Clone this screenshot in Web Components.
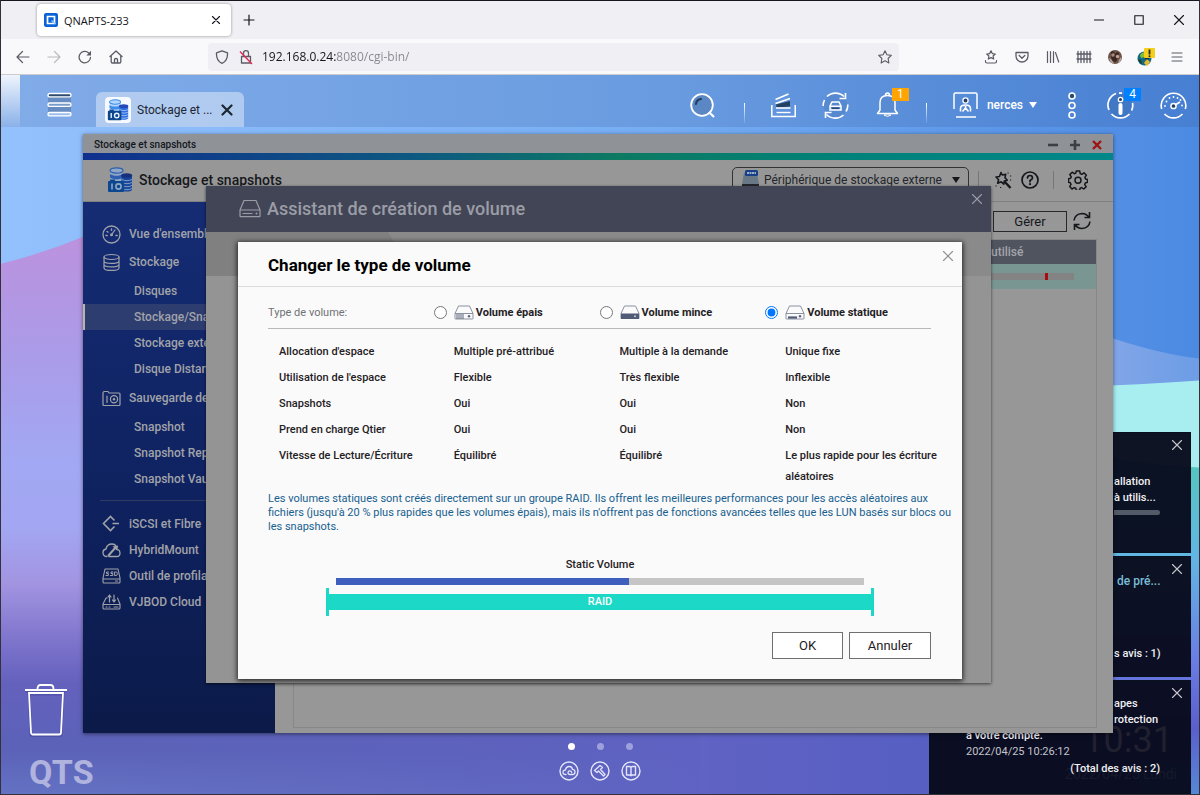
<!DOCTYPE html>
<html lang="fr">
<head>
<meta charset="utf-8">
<title>QNAPTS-233</title>
<style>
html, body { height: 100%; margin: 0; }
body { display: flex; flex-direction: column; box-sizing: border-box; overflow: hidden; border: 1px solid #33303c; border-top-color: #1a1620; font-family: Roboto, "Liberation Sans", sans-serif; font-size: 12px; color: #222; }
browser-chrome { flex: none; }
qts-desktop { flex: 1; min-height: 0; }
</style>
</head>
<body>
<browser-chrome></browser-chrome>
<qts-desktop></qts-desktop>
<script>
const STROKE = 'fill="none" stroke="currentColor" stroke-linecap="round" stroke-linejoin="round"';
const DISKS = `<path d="M3 4v11h13V4z" fill="var(--disk-b,#b4d6fb)"/><path d="M3 7c3 2.400 10 2.400 13 0v3.500c-3 2.400-10 2.400-13 0z" fill="var(--disk-a,#3d8cec)"/><ellipse cx="9.500" cy="3.500" rx="6.500" ry="2.600" fill="var(--disk-b,#b4d6fb)" stroke="var(--disk-a,#3d8cec)" stroke-width="1.200"/><path d="M14.500 9v14c2 2 8.500 2 10.500 0V9z" fill="var(--disk-c,#2f6ce0)"/><ellipse cx="19.700" cy="8.500" rx="5.500" ry="2.300" fill="var(--disk-d,#2448b8)"/><path d="M15 12.500c3 1.600 7 1.600 10 0M15 15.500c3 1.600 7 1.600 10 0M15 18.500c3 1.600 7 1.600 10 0M15 21.500c3 1.600 7 1.600 10 0" fill="none" stroke="var(--disk-b,#b4d6fb)" stroke-width=".9"/><rect x="1" y="14" width="16" height="11" rx="1" fill="#0d4790"/><rect x="3" y="12.500" width="5" height="3" fill="#0d4790"/><path d="M5 16.500v6" stroke="var(--disk-b,#eaf3ff)" stroke-width="1.600"/><circle cx="11.500" cy="19.500" r="2.600" fill="none" stroke="var(--disk-b,#eaf3ff)" stroke-width="1.600"/>`;
const ICONS = {
  back: [14, 14, `<path d="M13 7H1M6.500 1.500 1 7l5.500 5.500" ${STROKE} stroke-width="1.200"/>`],
  forward: [14, 14, `<path d="M1 7h12M7.500 1.500 13 7l-5.500 5.500" ${STROKE} stroke-width="1.200"/>`],
  reload: [14, 14, `<path d="M12.500 7.500a5.700 5.700 0 1 1-1.800-4.600" ${STROKE} stroke-width="1.300"/><path d="M13 .8v4.700H8.300z" fill="currentColor"/>`],
  home: [14, 14, `<path d="M1 6.500 7 1l6 5.500M2.200 6v5.800q0 1.200 1.200 1.200h7.200q1.200 0 1.200-1.200V6M5.500 13V9.500q0-1 1.500-1t1.500 1V13" ${STROKE} stroke-width="1.300"/>`],
  shield: [14, 14, `<path d="M7 .8 12.500 2.800c.3 5-1.500 8.700-5.500 10.500C3 11.500 1.200 7.800 1.500 2.800z" ${STROKE} stroke-width="1.300"/>`],
  lock: [14, 16, `<path d="M2.500 7.500h9V14h-9zM4.500 7.500V4.200a2.500 2.500 0 0 1 5 0v3.300" ${STROKE} stroke-width="1.300"/><path d="M1 2.500 13 15" stroke="#e22850" stroke-width="1.400"/>`],
  star: [14, 14, `<path d="M7 .8 8.900 4.800l4.400.6-3.200 3.100.8 4.400L7 10.800l-3.900 2.100.8-4.400L.7 5.400l4.400-.6z" ${STROKE} stroke-width="1.100"/>`],
  starTray: [14, 14, `<path d="M7 .8 8.300 3.600l3 .4L9.100 6l.6 3L7 7.600 4.300 9l.6-3L2.700 4l3-.4zM1.500 10.500v1q0 1.500 1.500 1.500h8q1.500 0 1.500-1.500v-1" ${STROKE} stroke-width="1.200"/>`],
  pocket: [14, 14, `<path d="M1 2.500h12V6a6 6 0 0 1-12 0zM4.200 5.500 7 8.200l2.800-2.700" ${STROKE} stroke-width="1.300"/>`],
  library: [14, 14, `<path d="M1.500 1.500v11M4.500 1.500v11M7.500 1.500v11M9.500 2.500l3.200 9.500" ${STROKE} stroke-width="1.200"/>`],
  fence: [16, 14, `<path d="M2 1.500v11M5 1.500v11M8 1.500v11M11 1.500v11M14 1.500v11M1 4h14M1 9h14" ${STROKE} stroke-width="1.300"/>`],
  photo: [16, 16, `<circle cx="8" cy="8" r="7" fill="#6b5348"/><path d="M4 3q3-2 4 2 2-3 4-1l-1 5-2 4-4-1-1-5z" fill="#3a2622"/><circle cx="6" cy="6" r="1.800" fill="#a68a7c"/><circle cx="10.500" cy="7.500" r="1.700" fill="#c4a393"/><path d="M2 9q3 1 5 6-4-1-5-6zM12 11l2-3q1 4-3 6z" fill="#b9a79e"/>`],
  globe: [20, 20, `<circle cx="8.500" cy="11.500" r="7" fill="#126a86"/><path d="M4 8q4-5 7-2l-2 4-4 1z" fill="#8bbf2b"/><path d="M8 16l3-4 3 3-3 4z" fill="#e8b72c"/><path d="M2 12l3 1 1 4q-3-1-4-5z" fill="#1d3f22"/><circle cx="11" cy="10" r="2.500" fill="#142f3c"/><rect x="8" y="1" width="11" height="10" rx="1" fill="#f4cf1e"/><path d="M13.500 2.500v5" stroke="#2a2a10" stroke-width="1.800"/><circle cx="13.500" cy="9.300" r="1" fill="#2a2a10"/>`],
  menu: [12, 12, `<path d="M1 2h10M1 6h10M1 10h10" ${STROKE} stroke-width="1.100"/>`],
  close: [10, 10, `<path d="M1.500 1.500l7 7M8.500 1.500l-7 7" ${STROKE} stroke-width="1.100"/>`],
  closeBig: [12, 12, `<path d="M1.500 1.500l9 9M10.500 1.500l-9 9" ${STROKE} stroke-width="2.200"/>`],
  closeThin: [12, 12, `<path d="M1.500 1.500l9 9M10.500 1.500l-9 9" ${STROKE} stroke-width="1.100"/>`],
  plus: [12, 12, `<path d="M6 1v10M1 6h10" ${STROKE} stroke-width="1.200"/>`],
  plusBold: [10, 10, `<path d="M5 0v10M0 5h10" stroke="currentColor" stroke-width="2.600"/>`],
  minus: [10, 10, `<path d="M0 5h10" stroke="currentColor" stroke-width="1"/>`],
  minusBold: [10, 10, `<path d="M0 5h10" stroke="currentColor" stroke-width="2.600"/>`],
  crossRed: [10, 10, `<path d="M1 1l8 8M9 1l-8 8" stroke="currentColor" stroke-width="2.400"/>`],
  maximize: [10, 10, `<path d="M.8.8h8.400v8.400H.8z" fill="none" stroke="currentColor" stroke-width="1.100"/>`],
  qnap: [14, 14, `<rect width="14" height="14" rx="2" fill="#0a63d6"/><path d="M3.500 3.500h7v7h-7z" fill="none" stroke="#fff" stroke-width="1.700"/><path d="M7.500 7.500 11.500 11" stroke="#9cc6ff" stroke-width="1.600"/>`],
  burger: [25, 26, `<rect x="1" y="4" width="23" height="18" fill="#5c7fb0" opacity=".7"/><rect x="1" y="1.500" width="23" height="3.400" rx="1.700" fill="#2d4a70" stroke="#fff" stroke-width="1.400"/><rect x="1" y="11" width="23" height="3.400" rx="1.700" fill="#7a9ccc" stroke="#fff" stroke-width="1.400"/><rect x="1" y="20.500" width="23" height="3.400" rx="1.700" fill="#9dbff0" stroke="#fff" stroke-width="1.400"/>`],
  disks: [26, 26, DISKS],
  search: [25, 25, `<circle cx="12" cy="12" r="10.800" fill="#5b87c4" stroke="#fff" stroke-width="1.800"/><path d="M6 11q.5-4.500 5-5" fill="none" stroke="#21405e" stroke-width="2.200" stroke-linecap="round"/><path d="M19 19l5 5" stroke="#fff" stroke-width="2.200"/>`],
  stack: [25, 25, `<path d="M.8 12v11.500h23.400V12" fill="none" stroke="#fff" stroke-width="1.500"/><path d="M5.500 19.500h14" stroke="#fff" stroke-width="1.400"/><path d="M5 11.500 19 8v5.500L5.500 14.500z" fill="#24415f"/><path d="M4.500 6.500 17.500 1M4.500 10.500 19 5.500M5 15h14.500" stroke="#fff" stroke-width="1.500"/>`],
  sync: [27, 27, `<circle cx="13.500" cy="13.500" r="11.500" fill="#4e80c4" opacity=".5"/><path d="M1.200 14A12.300 12.300 0 0 1 2.500 8M5 4.500A12.300 12.300 0 0 1 22 4.500M25.800 12.500A12.300 12.300 0 0 1 24 19.500M21.500 23A12.300 12.300 0 0 1 4.500 22.500" fill="none" stroke="#fff" stroke-width="1.600"/><path d="M23.500 1v5.500h-6M3.500 26v-5.500h6" fill="none" stroke="#fff" stroke-width="1.600"/><path d="M8 18v-4l2-4h7l2 4v4zM8 14.200h11" fill="none" stroke="#fff" stroke-width="1.500"/><path d="M10 16.200h7" stroke="#24415f" stroke-width="1.300"/>`],
  bell: [25, 26, `<path d="M9 23q3.500 3 7 0z" fill="#21405e" stroke="#fff"/><path d="M2.500 21.500 5 18v-7.500c0-4.500 3-7 7.500-7s7.500 2.500 7.500 7V18l2.500 3.500zM10.500 3.300q0-2.300 2-2.300t2 2.300" fill="#588bd2" stroke="#fff" stroke-width="1.500" stroke-linejoin="round"/>`],
  user: [25, 26, `<path d="M1 17V2.500Q1 1 2.500 1h20Q24 1 24 2.500V17M3 25h20" fill="none" stroke="#fff" stroke-width="1.500"/><circle cx="12.500" cy="8.500" r="2.600" fill="#24415f" stroke="#fff" stroke-width="1.300"/><path d="M7.500 19.500v-3q0-3.500 5-3.500t5 3.500v3M12.500 14v2l-3 3.500M12.500 16l3 3.500" fill="none" stroke="#fff" stroke-width="1.600"/>`],
  dots: [10, 27, `<circle cx="5" cy="4" r="3" fill="#2a4a70" stroke="#fff" stroke-width="1.600"/><circle cx="5" cy="13.500" r="3" fill="#4f86d2" stroke="#fff" stroke-width="1.600"/><circle cx="5" cy="23" r="3" fill="#4f86d2" stroke="#fff" stroke-width="1.600"/>`],
  info: [27, 27, `<circle cx="13.500" cy="13.500" r="11.500" fill="#356bb4" opacity=".5"/><path d="M9 1.500A12.300 12.300 0 0 0 2 18M25.500 11q.8 4-1 7.500M4.500 22a12.300 12.300 0 0 0 18 0M12 1.200h3" fill="none" stroke="#fff" stroke-width="1.700"/><circle cx="13.500" cy="7.500" r="2.200" fill="#24415f" stroke="#fff" stroke-width="1.300"/><path d="M13.500 13v8" stroke="#fff" stroke-width="4" stroke-linecap="round"/>`],
  gauge: [27, 27, `<path d="M1.700 17A12.300 12.300 0 1 1 25.300 17M4.500 22a12.300 12.300 0 0 0 18 0" fill="none" stroke="#fff" stroke-width="1.600"/><g fill="#fff"><circle cx="5" cy="14" r=".9"/><circle cx="6.500" cy="9.500" r=".9"/><circle cx="9.500" cy="6" r=".9"/><circle cx="13.500" cy="5" r=".9"/><circle cx="17.500" cy="6" r=".9"/><circle cx="20.500" cy="8" r=".9"/><circle cx="22" cy="13.500" r=".9"/></g><circle cx="13.500" cy="14" r="2.600" fill="#24415f" stroke="#fff" stroke-width="1.500"/><path d="M15 13l5-3" stroke="#fff" stroke-width="1.800"/>`],
  dash: [19, 19, `<circle cx="9.500" cy="9.500" r="8.500" ${STROKE} stroke-width="1.300"/><circle cx="9.500" cy="9.800" r="1.500" fill="currentColor"/><path d="M10 9l3-4" ${STROKE} stroke-width="1.200"/><path d="M4 10.500h1.200M5 6.500l1 .6M9.500 4v1.200M14 10.500h1.200" ${STROKE} stroke-width="1.400"/>`],
  db: [19, 19, `<ellipse cx="9.500" cy="4" rx="7.500" ry="2.500" ${STROKE} stroke-width="1.200"/><path d="M2 4v11c0 3.300 15 3.300 15 0V4M2 8c0 3.200 15 3.200 15 0M2 11.500c0 3.200 15 3.200 15 0" ${STROKE} stroke-width="1.200"/>`],
  snap: [19, 17, `<path d="M1 15V3q0-1.500 1.500-1.500H6L7 3h10q1 0 1 1v10.500q0 1-1 1H2q-1 0-1-1M5 6v6.500" ${STROKE} stroke-width="1.200"/><circle cx="12" cy="9.300" r="3.600" ${STROKE} stroke-width="1.200"/><circle cx="12" cy="9.300" r="1.200" fill="currentColor"/>`],
  iscsi: [19, 18, `<path d="M12.500 5.500 8.500 1.500 1.500 8.500l7 7 4-4M10.500 8.500H17" fill="none" stroke="currentColor" stroke-width="1.600"/>`],
  cloud: [19, 15, `<path d="M5 13.500q-4 0-4-4 0-3 3-3.500Q5 1 10 1q3 0 4 2M7 13.500h8q3 0 3-3.500 0-2.500-2-3.500" ${STROKE} stroke-width="1.300"/><path d="M6 13l8-9" stroke="currentColor" stroke-width="2"/><path d="M10.500 3.500 16 2.500l-.5 5.500z" fill="currentColor"/>`],
  ssd: [19, 16, `<path d="M3 1h13l2 9v4q0 1-1 1H2q-1 0-1-1v-4zM1 11h17M13.500 13h2" ${STROKE} stroke-width="1.100"/><path d="M6.500 4H4.500v1.500h1.800V7.500H4M11 4H9v1.500h1.800V7.500H8.500M13 4h1.200q1.200 0 1.200 1.700t-1.200 1.800H13z" ${STROKE} stroke-width="1"/>`],
  vjbod: [19, 16, `<path d="M5 4H4L1 10v4q0 1 1 1h15q1 0 1-1v-4l-2.500-6M1 10.500h17M4 13h1M7 13h1M12 13h4" ${STROKE} stroke-width="1.100"/><path d="M7.500 8V2M6 3l1.500-2L9 3M12 1v6M10.500 6 12 8l1.500-2" ${STROKE} stroke-width="1.200"/>`],
  drive: [22, 19, `<path d="M5 1.500h12L21 11v6q0 .7-.7.7H1.700Q1 17.700 1 17v-6zM1 11h20M4 14.500h9" ${STROKE} stroke-width="1.200"/><circle cx="17.500" cy="14.500" r="1" fill="currentColor"/>`],
  raid: [20, 20, `<path d="M3 3h13l2 11v5H1v-5z" fill="#687886"/><path d="M1 14h17v5H1z" fill="#24282c"/><rect x="4" y="0" width="13" height="6" rx="1.500" fill="#173f86"/><path d="M6 3h9" stroke="#9dadc8" stroke-width="2" stroke-dasharray="2 .5"/>`],
  wand: [18, 18, `<path d="M7 1.500 8.200 4l3.500-.6-.7 3.300 2.300 2.500-3 .8-.5 3.200-2.600-2.400-3.500 1.400.9-3.500L2 6l3.500-.5z" ${STROKE} stroke-width="1.600"/><path d="M10.500 10.500 16.500 17" stroke="currentColor" stroke-width="2.400"/><path d="M13.500 2h1.200M16 5h1.200M16 9h1.200M1.500 15h1.200M6 16.500h1.200" stroke="currentColor" stroke-width="1.200"/>`],
  help: [18, 18, `<circle cx="9" cy="9" r="8" ${STROKE} stroke-width="1.700"/><path d="M6.500 7q0-2.500 2.500-2.500T11.500 7Q11.500 8.200 9 9.500v1.200" ${STROKE} stroke-width="1.700"/><circle cx="9" cy="13.200" r="1.100" fill="currentColor"/>`],
  gear: [20, 20, `<path d="M8.300 1h3.400l.5 2.600 1.600.7 2.200-1.500 2.400 2.400-1.500 2.200.7 1.600 1.900.5v2.800l-2.200.7-.6 1.600 1.500 2-2.400 2.400-2.100-1.400-1.600.7-.5 2.200H8.300l-.5-2.300-1.600-.6L4 19l-2.300-2.400L3 14.400l-.7-1.600-1.800-.6V8.800L2.600 8.300l.7-1.500L1.800 4.600 4.200 2.200l2.100 1.500 1.500-.6z" ${STROKE} stroke-width="1.500"/><circle cx="10" cy="10.300" r="3" ${STROKE} stroke-width="1.500"/>`],
  refresh: [18, 20, `<path d="M1 9.500Q2 3 9 2.500q4.500 0 7 4M17 10.500q-1 6.500-8 7-4.500 0-7-4M16.500 1v5.500h-5M1.500 19v-5.500h5" fill="none" stroke="currentColor" stroke-width="1.600"/>`],
  thick: [20, 15, `<path d="M4.500 1h11l3.500 7.500v5q0 .5-.5.5h-17q-.5 0-.5-.5v-5zM1 8.500h18" fill="none" stroke="#8a91a3"/><path d="M3 9v5M5 9v5M7 9v5M9 9v5" stroke="#5b637b"/><circle cx="15" cy="11.300" r="1.200" fill="#5b637b"/>`],
  thin: [20, 15, `<path d="M4.500 1h11l3.500 7.500v5H1v-5z" fill="none" stroke="#8a91a3"/><path d="M1 8.500h18V14H1z" fill="#515b76"/><circle cx="15" cy="11.300" r="1" fill="#c7ccd8"/>`],
  fixed: [20, 15, `<path d="M4.500 1h11l3.500 7.500v5q0 .5-.5.5h-17q-.5 0-.5-.5v-5zM1 8.500h18" fill="none" stroke="#8a91a3"/><path d="M3 12.500h9" stroke="#515b76" stroke-width="2.200"/><circle cx="15" cy="11.300" r="1.200" fill="#5b637b"/>`],
  trash: [42, 54, `<g fill="none" stroke="#33348a" stroke-width="3" opacity=".35" transform="translate(0 1)"><path d="M0 7h42M4 10l2 40q.2 2 2 2h26q2 0 2-2l2-40z"/></g><g fill="none" stroke="#fff" stroke-width="1.800"><path d="M0 7h42M12.500 6q0-4 3-4h10q3 0 3 4M4 10l2 39.500q.2 2 2 2h26q2 0 2-2L38 10z"/></g>`],
  dockCloud: [20, 20, `<circle cx="10" cy="10" r="9" ${STROKE} stroke-width="1.400"/><path d="M7 13.500q-3 0-3-2.300T6.500 9Q7 5.500 10.300 5.500q2.700 0 3.200 2.800Q16 8.500 16 11t-2.500 2.500H11q-2 0-2-1.800t1.800-1.800 1.900 1.600" ${STROKE} stroke-width="1.300"/>`],
  dockTool: [20, 20, `<circle cx="10" cy="10" r="9" ${STROKE} stroke-width="1.400"/><path d="M4.500 9.500 10 4.500l2.500 2-2 2 4.500 5-1.500 1.500-5-5-1.500 1.500z" ${STROKE} stroke-width="1.300"/>`],
  dockBook: [20, 20, `<circle cx="10" cy="10" r="9" ${STROKE} stroke-width="1.400"/><path d="M5.500 5.500H9l1 1 1-1h3.500v8.500H11l-1 .8-1-.8H5.500zM10 6.500v8" ${STROKE} stroke-width="1.400"/>`],
  caret: [8, 6, `<path d="M0 0h8L4 6z" fill="currentColor"/>`]
};

const RESET = `*{box-sizing:border-box}button{display:inline-flex;align-items:center;justify-content:center;margin:0;padding:0;border:0;background:none;font:inherit;color:inherit}a{color:inherit;text-decoration:none}h1,h2,p,ul{margin:0;padding:0;list-style:none}`;

function define(name, css, html) {
  const tpl = document.createElement('template');
  tpl.innerHTML = `<style>${RESET}${css}</style>${html}`;
  customElements.define(name, class extends HTMLElement {
    constructor() {
      super();
      this.attachShadow({ mode: 'open' }).append(tpl.content.cloneNode(true));
    }
  });
}

customElements.define('q-icon', class extends HTMLElement {
  connectedCallback() {
    if (this.shadowRoot) return;
    const [w, h, art] = ICONS[this.getAttribute('name')];
    const size = this.getAttribute('size');
    this.attachShadow({ mode: 'open' }).innerHTML =
      `<style>:host{display:inline-block;flex:none;line-height:0}svg{display:block}</style><svg width="${size || w}" height="${size || h}" viewBox="0 0 ${w} ${h}" aria-hidden="true">${art}</svg>`;
  }
});

define('browser-chrome', `
:host{display:block;font-family:"Open Sans","Noto Sans",sans-serif;color:#15141a}
.tabs{display:flex;height:38px;background:#f0f0f4;padding-left:36px}
.tab{display:flex;align-items:center;width:194px;margin:3px 0;padding:0 9px 0 7px;background:#fff;border-radius:4px;box-shadow:0 0 3px rgba(0,0,0,.4);font-size:11px}
.tab span{flex:1;padding-left:6px}
.tab button{width:12px;height:20px}
.new{width:36px}
.win{display:flex;margin-left:auto}
.win button{width:40px}
.nav{display:flex;align-items:center;height:36px;background:#f9f9fb;border-bottom:1px solid #cccccf;color:#5b5b66}
.group{display:flex;padding-left:6px}
.group button{width:31px;height:28px}
.off{opacity:.4}
.url{display:flex;align-items:center;flex:1;height:28px;margin:0 76px 0 77px;padding:0 7px;background:#f0f0f4;border-radius:4px}
.url q-icon+q-icon{margin-left:10px}
.url input{flex:1;min-width:0;margin-left:9px;padding:0;border:0;outline:0;font:12px "Open Sans","Noto Sans",sans-serif;color:transparent;background:linear-gradient(90deg,#15141a 74px,#85858d 74px) text}
.end{padding:0 7px 0 0}
`, `
<div class="tabs"><div class="tab"><q-icon name="qnap"></q-icon><span>QNAPTS-233</span><button aria-label="Fermer l’onglet"><q-icon name="close"></q-icon></button></div>
<button class="new" aria-label="Nouvel onglet"><q-icon name="plus"></q-icon></button>
<div class="win"><button aria-label="Réduire"><q-icon name="minus"></q-icon></button><button aria-label="Agrandir"><q-icon name="maximize"></q-icon></button><button aria-label="Fermer"><q-icon name="closeThin"></q-icon></button></div></div>
<div class="nav"><div class="group"><button aria-label="Précédent"><q-icon name="back"></q-icon></button><button class="off" aria-label="Suivant"><q-icon name="forward"></q-icon></button><button aria-label="Actualiser"><q-icon name="reload"></q-icon></button><button aria-label="Accueil"><q-icon name="home"></q-icon></button></div>
<div class="url"><q-icon name="shield"></q-icon><q-icon name="lock"></q-icon><input aria-label="Adresse" value="192.168.0.24:8080/cgi-bin/"><q-icon name="star"></q-icon></div>
<div class="group end"><button aria-label="Marque-pages"><q-icon name="starTray"></q-icon></button><button aria-label="Pocket"><q-icon name="pocket"></q-icon></button><button aria-label="Bibliothèque"><q-icon name="library"></q-icon></button><button aria-label="Barrière"><q-icon name="fence"></q-icon></button><button aria-label="Profil"><q-icon name="photo"></q-icon></button><button aria-label="Extension"><q-icon name="globe"></q-icon></button><button aria-label="Menu"><q-icon name="menu"></q-icon></button></div></div>
`);

define('desk-wallpaper', `:host{display:block}svg{display:block;width:100%;height:100%}`, `
<svg viewBox="0 0 1200 720" preserveAspectRatio="none" aria-hidden="true">
<defs>
<linearGradient id="sky"><stop offset="0" stop-color="#93c1fd"/><stop offset=".55" stop-color="#76adf3"/><stop offset="1" stop-color="#4c8ae2"/></linearGradient>
<linearGradient id="hill" gradientUnits="userSpaceOnUse" x1="0" y1="165" x2="0" y2="720"><stop offset="0" stop-color="#bb92de"/><stop offset=".2" stop-color="#ab9be8"/><stop offset=".4" stop-color="#a2a8f3"/><stop offset=".52" stop-color="#a3a6f2"/><stop offset=".62" stop-color="#a294e1"/><stop offset=".72" stop-color="#7f75cd"/><stop offset=".8" stop-color="#6461bd"/><stop offset=".92" stop-color="#5b62b8"/><stop offset="1" stop-color="#6472c3"/></linearGradient>
<linearGradient id="floor"><stop offset="0" stop-color="#5d61ba" stop-opacity="0"/><stop offset=".6" stop-color="#5f62c3"/><stop offset="1" stop-color="#4f5cc2"/></linearGradient>
<linearGradient id="sea" gradientUnits="userSpaceOnUse" x1="0" y1="390" x2="0" y2="720"><stop offset="0" stop-color="#54c6bf"/><stop offset=".28" stop-color="#62b6e4"/><stop offset=".6" stop-color="#6a7ce4"/><stop offset=".8" stop-color="#5a5fcb"/><stop offset="1" stop-color="#5688d8"/></linearGradient>
<linearGradient id="band"><stop offset="0" stop-color="#8aa8e8"/><stop offset="1" stop-color="#6c9de6"/></linearGradient>
</defs>
<rect width="1200" height="720" fill="url(#sky)"/>
<path d="M0 189Q45 178 90 159L700 100V720H0z" fill="url(#hill)"/>
<path d="M1080 252Q1150 278 1200 284V320H1080z" fill="url(#band)"/>
<path d="M1000 314Q1120 312 1200 306V400H1000z" fill="#a8eef1"/>
<path d="M1000 360Q1120 390 1200 393V720H1000z" fill="url(#sea)"/>
<rect x="80" y="650" width="1060" height="70" fill="url(#floor)"/>
</svg>`);

define('desk-topbar', `
:host{display:flex;height:52px;padding-right:12px;background:rgba(50,80,140,.18);color:#fff}
.corner{width:19px;background:linear-gradient(#eef4fd,rgba(160,190,235,.3))}
.menu{width:40px;margin:0 17px 0 19px;padding-top:8px}
.app{display:flex;align-items:center;align-self:flex-end;width:148px;height:35px;padding:0 11px 0 9px;border-radius:6px 6px 0 0;background:rgba(220,232,248,.55);color:#1c2733;font-size:12px}
.tile{display:grid;place-items:center;width:26px;height:26px;border-radius:4px;background:#f6faff}
.app span{flex:1;padding-left:6px;white-space:nowrap}
.tools{display:flex;align-items:center;gap:26px;margin-left:auto;padding-top:8px}
.tools button{position:relative;height:27px}
.s{width:31px}
i{width:1px;height:20px;margin-top:16px;background:linear-gradient(#fff,rgba(255,255,255,.1))}
.who{gap:9px;font-size:12px;font-weight:500}
.who q-icon+span{margin-right:-3px}
b{position:absolute;left:17px;top:-4px;width:17px;height:13px;font:12px/13px Roboto,sans-serif;text-align:center;color:#fff}
.o{background:#ffa400}.b{background:#007fff}
.d{width:18px}
`, `
<div class="corner"></div><button class="menu" aria-label="Menu principal"><q-icon name="burger"></q-icon></button>
<div class="app"><div class="tile"><q-icon name="disks" size="22"></q-icon></div><span>Stockage et ...</span><button aria-label="Fermer"><q-icon name="closeBig"></q-icon></button></div>
<div class="tools"><button class="s" aria-label="Rechercher"><q-icon name="search"></q-icon></button><i></i><button aria-label="Tâches"><q-icon name="stack"></q-icon></button><button aria-label="Synchronisation"><q-icon name="sync"></q-icon></button><button aria-label="Notifications"><q-icon name="bell"></q-icon><b class="o">1</b></button><i></i><button class="who"><q-icon name="user"></q-icon><span>nerces</span><q-icon name="caret"></q-icon></button><button class="d" aria-label="Plus"><q-icon name="dots"></q-icon></button><button aria-label="Informations"><q-icon name="info"></q-icon><b class="b">4</b></button><button aria-label="Tableau de bord"><q-icon name="gauge"></q-icon></button></div>
`);

define('side-link', `
:host{display:block}
a{display:flex;align-items:center;height:26px;padding-left:50px;border-left:1px solid transparent;white-space:nowrap;font-weight:500;color:#a1a3a8}
:host([top]) a{padding-left:18px}
:host([group]) a{height:32px}
:host([first]) a{height:24px}
:host([current]) a{border-left:2px solid #b5b5a8;padding-left:49px;background:#2e3d70}
::slotted(q-icon){width:19px;margin-right:8px}
`, `<a href="#"><slot></slot></a>`);

define('storage-window', `
:host{display:flex;flex-direction:column;background:#979797;box-shadow:0 1px 4px rgba(0,0,0,.5);color:#15171c}
.title{display:flex;align-items:center;height:19px;padding:2px 11px 0;background:#8f9397;font-size:10px;font-weight:500}
.title button{width:22px;color:#3c3f45}
.title span{flex:1}
.title .x{color:#a01414}
.title button:last-child{margin-right:-6px}
.strip{height:7px;background:linear-gradient(90deg,#10308e,#0d5a80 33%,#0d7a62 52%,#00827a 75%,#008789)}
header{display:flex;align-items:center;height:42px;padding:0 25px 2px 24px;border-bottom:1px solid #808080}
header q-icon{--disk-a:#2d5fae;--disk-b:#8fa6c4;--disk-c:#17479e;--disk-d:#16307c}
h1{flex:1;padding-left:6px;font-size:14px;font-weight:500}
.pick{display:flex;align-items:center;width:237px;height:26px;padding:0 8px;border:1px solid #333;border-radius:5px}
select{appearance:none;flex:1;min-width:0;margin-left:3px;padding:0;border:0;background:none;font:12px Roboto,sans-serif;color:#22252b}
i{width:1px;height:18px;background:#777}
.i1{margin:0 15px 0 9px}.i2{margin:0 14px}
.help{margin-left:9px}
.main{display:flex;flex:1;min-height:0}
nav{width:192px;padding-top:20px;overflow:hidden;background:linear-gradient(#152c74,#0f2260 55%,#0b1a48)}
hr{margin:8px 10px 10px 17px;border:0;border-top:1px solid #2d3a62}
.content{display:flex;flex-direction:column;flex:1;padding:8px 16px 5px 18px}
.bar{display:flex;justify-content:flex-end;align-items:center;gap:6px;height:22px;margin:0 6px 7px 0}
.bar .g{width:74px;height:21px;border:1px solid #26282c;font-size:13px}
.list{flex:1;border:1px solid #878787}
table{width:100%;border-spacing:0;font-size:12px}
th{height:24px;padding:0;background:#50545f;color:#a3a5ab;font-weight:500;text-align:left}
td{height:25px;padding:0 22px 0 0;background:#7a9693}
th:last-child,td:last-child{width:105px}
.use{height:7px;background:linear-gradient(90deg,#838383 54px,#a80c0c 54px 57px,#838383 57px)}
`, `
<div class="title"><span>Stockage et snapshots</span><button aria-label="Réduire"><q-icon name="minusBold"></q-icon></button><button aria-label="Agrandir"><q-icon name="plusBold"></q-icon></button><button class="x" aria-label="Fermer"><q-icon name="crossRed"></q-icon></button></div>
<div class="strip"></div>
<header><q-icon name="disks"></q-icon><h1>Stockage et snapshots</h1><div class="pick"><q-icon name="raid"></q-icon><select aria-label="Périphérique"><option>Périphérique de stockage externe</option></select><q-icon name="caret"></q-icon></div><i class="i1"></i><button aria-label="Assistant"><q-icon name="wand"></q-icon></button><button class="help" aria-label="Aide"><q-icon name="help"></q-icon></button><i class="i2"></i><button aria-label="Paramètres"><q-icon name="gear"></q-icon></button></header>
<div class="main"><nav>
<side-link top first><q-icon name="dash"></q-icon>Vue d'ensemble</side-link>
<side-link top group><q-icon name="db"></q-icon>Stockage</side-link>
<side-link>Disques</side-link><side-link current>Stockage/Snapshots</side-link><side-link>Stockage externe</side-link><side-link>Disque Distant</side-link>
<side-link top group><q-icon name="snap"></q-icon>Sauvegarde de</side-link>
<side-link>Snapshot</side-link><side-link>Snapshot Replica</side-link><side-link>Snapshot Vault</side-link>
<hr>
<side-link top><q-icon name="iscsi"></q-icon>iSCSI et Fibre</side-link><side-link top><q-icon name="cloud"></q-icon>HybridMount</side-link><side-link top><q-icon name="ssd"></q-icon>Outil de profilage</side-link><side-link top><q-icon name="vjbod"></q-icon>VJBOD Cloud</side-link>
</nav>
<div class="content"><div class="bar"><button class="g">Gérer</button><button aria-label="Actualiser"><q-icon name="refresh"></q-icon></button></div>
<div class="list"><table><thead><tr><th></th><th>utilisé</th></tr></thead><tbody><tr><td></td><td><div class="use"></div></td></tr></tbody></table></div></div></div>
`);

define('wizard-window', `
:host{display:flex;flex-direction:column;background:#949494;box-shadow:0 1px 3px rgba(0,0,0,.6)}
header{display:flex;align-items:center;gap:6px;height:46px;padding:0 8px 2px 33px;background:#424556;color:#9b9da6}
h2{flex:1;font-size:18px;font-weight:500}
button{align-self:flex-start;margin-top:7px}
.steps{height:44px;background:linear-gradient(62deg,#808080 181px,#8a8a8a 182px)}
`, `<header><q-icon name="drive"></q-icon><h2>Assistant de création de volume</h2><button aria-label="Fermer"><q-icon name="closeThin"></q-icon></button></header><div class="steps"></div>`);

define('volume-dialog', `
:host{display:flex;flex-direction:column;background:#fafafa;box-shadow:0 1px 5px 1px rgba(0,0,0,.75);color:#1f2124;font-size:11px}
header{display:flex;justify-content:space-between;height:45px;padding:8px 8px 0 30px;border-bottom:1px solid #dcdcdc}
h2{font-size:17px;line-height:30px;font-weight:700;color:#000}
header button{align-self:flex-start;color:#8f8f8f}
form{flex:1;display:flex;flex-direction:column;padding:8px 31px 20px 30px}
table{width:100%;table-layout:fixed;border-spacing:0;text-align:left;line-height:21px}
thead th{height:34px;padding:1px 0 0;border-bottom:1px solid #b8b8b8;font-weight:400;color:#6f7276}
thead label{display:flex;align-items:center;font-weight:700;color:#1f2124}
input{margin:0 7px 0 0}
label q-icon{margin-right:2px}
tbody th,tbody td{padding:0 0 5px 20px;vertical-align:top;font-weight:500;white-space:nowrap}
tbody th{padding-left:11px}
tbody tr:first-child>*{padding-top:12px}
p{margin-right:-26px;line-height:14px;color:#17608f}
figure{margin:21px 57px 0 58px}
figcaption{line-height:20px;margin-bottom:3px;text-align:center;font-weight:500}
.vol{height:7px;margin:0 10px 3px;background:linear-gradient(90deg,#3f5fbf 0 293px,#c5c5c5 293px)}
.raid{display:flex;align-items:center;height:28px;border:solid #1bd9c6;border-width:0 3px}
.raid span{flex:1;height:16px;line-height:16px;background:#1bd9c6;color:#fff;font-weight:500;text-align:center}
footer{display:flex;justify-content:flex-end;gap:6px;margin-top:auto}
footer button{width:82px;height:27px;border:1px solid #6f6f6f;background:#fff;font-size:13px}
footer button:first-child{width:71px}
`, `
<header><h2>Changer le type de volume</h2><button aria-label="Fermer"><q-icon name="closeThin"></q-icon></button></header>
<form><table><thead><tr><th>Type de volume:</th>
<th><label><input type="radio" name="type"><q-icon name="thick"></q-icon>Volume épais</label></th>
<th><label><input type="radio" name="type"><q-icon name="thin"></q-icon>Volume mince</label></th>
<th><label><input type="radio" name="type" checked><q-icon name="fixed"></q-icon>Volume statique</label></th></tr></thead>
<tbody><tr><th>Allocation d'espace</th><td>Multiple pré-attribué</td><td>Multiple à la demande</td><td>Unique fixe</td></tr>
<tr><th>Utilisation de l'espace</th><td>Flexible</td><td>Très flexible</td><td>Inflexible</td></tr>
<tr><th>Snapshots</th><td>Oui</td><td>Oui</td><td>Non</td></tr>
<tr><th>Prend en charge Qtier</th><td>Oui</td><td>Oui</td><td>Non</td></tr>
<tr><th>Vitesse de Lecture/Écriture</th><td>Équilibré</td><td>Équilibré</td><td>Le plus rapide pour les écriture<br>aléatoires</td></tr></tbody></table>
<p>Les volumes statiques sont créés directement sur un groupe RAID. Ils offrent les meilleures performances pour les accès aléatoires aux fichiers (jusqu'à 20 % plus rapides que les volumes épais), mais ils n'offrent pas de fonctions avancées telles que les LUN basés sur blocs ou les snapshots.</p>
<figure><figcaption>Static Volume</figcaption><div class="vol"></div><div class="raid"><span>RAID</span></div></figure>
<footer><button type="button">OK</button><button type="button">Annuler</button></footer></form>
`);

define('notice-card', `
:host{display:flex;flex-direction:column;position:relative;height:121px;padding:41px 30px 0 184px;border:1px solid #07101c;background:rgba(8,10,28,.96);color:#f0f0f2;font-size:11px;font-weight:500;line-height:16px;white-space:nowrap}
:host([tone="info"]){padding-top:16px}
:host([tone="last"]){height:114px;padding-top:15px}
button{position:absolute;right:7px;top:6px;color:#c8c8cc}
`, `<button aria-label="Fermer"><q-icon name="closeThin"></q-icon></button><slot></slot>`);

define('notice-stack', `
:host{display:flex;flex-direction:column;gap:3px}
.bar{height:5px;margin-top:4px;border-radius:0 3px 3px 0;background:#545b68}
.cyan{font-size:12px;color:#78bcd6}
.total{margin-top:auto;margin-bottom:14px;text-align:right}
.left{margin-left:-148px}
.muted{color:#c4c4cc;font-weight:400}
.clock{position:absolute;right:17px;top:38px;font:36px/42px Roboto,sans-serif;color:#20202f}
.date{position:absolute;right:13px;top:84px;font:14px/18px Roboto,sans-serif;color:#171a2a}
.front{position:relative;margin-left:-148px;margin-bottom:16px}
`, `
<notice-card><span>allation</span><span>à utilis...</span><div class="bar"></div></notice-card>
<notice-card tone="info"><span class="cyan">&nbsp;de pré...</span><span class="total">s avis : 1)</span></notice-card>
<notice-card tone="last"><span class="clock">10:31</span><span class="date">2022/04/25 Lundi</span><span>apes</span><span>rotection</span><span class="left">à votre compte.</span><span class="left muted">2022/04/25 10:26:12</span><span class="total front">(Total des avis : 2)</span></notice-card>
`);

define('desk-dock', `
:host{display:flex;flex-direction:column;align-items:center;gap:11px;color:#e4e6fa}
div{display:flex;gap:11px}
.pages{gap:22px}
.pages button{width:7px;height:7px;border-radius:50%;background:#9da0dc}
.pages button:first-child{background:#fff}
`, `<div class="pages"><button aria-label="Bureau 1"></button><button aria-label="Bureau 2"></button><button aria-label="Bureau 3"></button></div>
<div><button aria-label="myQNAPcloud"><q-icon name="dockCloud"></q-icon></button><button aria-label="Utilitaires"><q-icon name="dockTool"></q-icon></button><button aria-label="Aide"><q-icon name="dockBook"></q-icon></button></div>`);

define('qts-desktop', `
:host{display:block;position:relative;overflow:hidden}
desk-wallpaper{position:absolute;inset:0}
desk-topbar{position:relative}
.trash{position:absolute;left:24px;bottom:57px}
.logo{position:absolute;left:28px;bottom:1px;font-size:34px;line-height:42px;font-weight:700;color:#b0b3de}
notice-stack{position:absolute;right:8px;bottom:0;width:262px}
storage-window{position:absolute;left:82px;right:86px;top:59px;bottom:61px}
wizard-window{position:absolute;left:205px;right:208px;top:111px;bottom:111px}
volume-dialog{position:absolute;left:237px;right:237px;top:167px;bottom:115px}
desk-dock{position:absolute;left:0;right:0;bottom:13px}
`, `
<desk-wallpaper></desk-wallpaper><desk-topbar></desk-topbar>
<button class="trash" aria-label="Corbeille"><q-icon name="trash"></q-icon></button><span class="logo">QTS</span>
<desk-dock></desk-dock><notice-stack></notice-stack>
<storage-window></storage-window><wizard-window></wizard-window><volume-dialog></volume-dialog>
`);
</script>
</body>
</html>
